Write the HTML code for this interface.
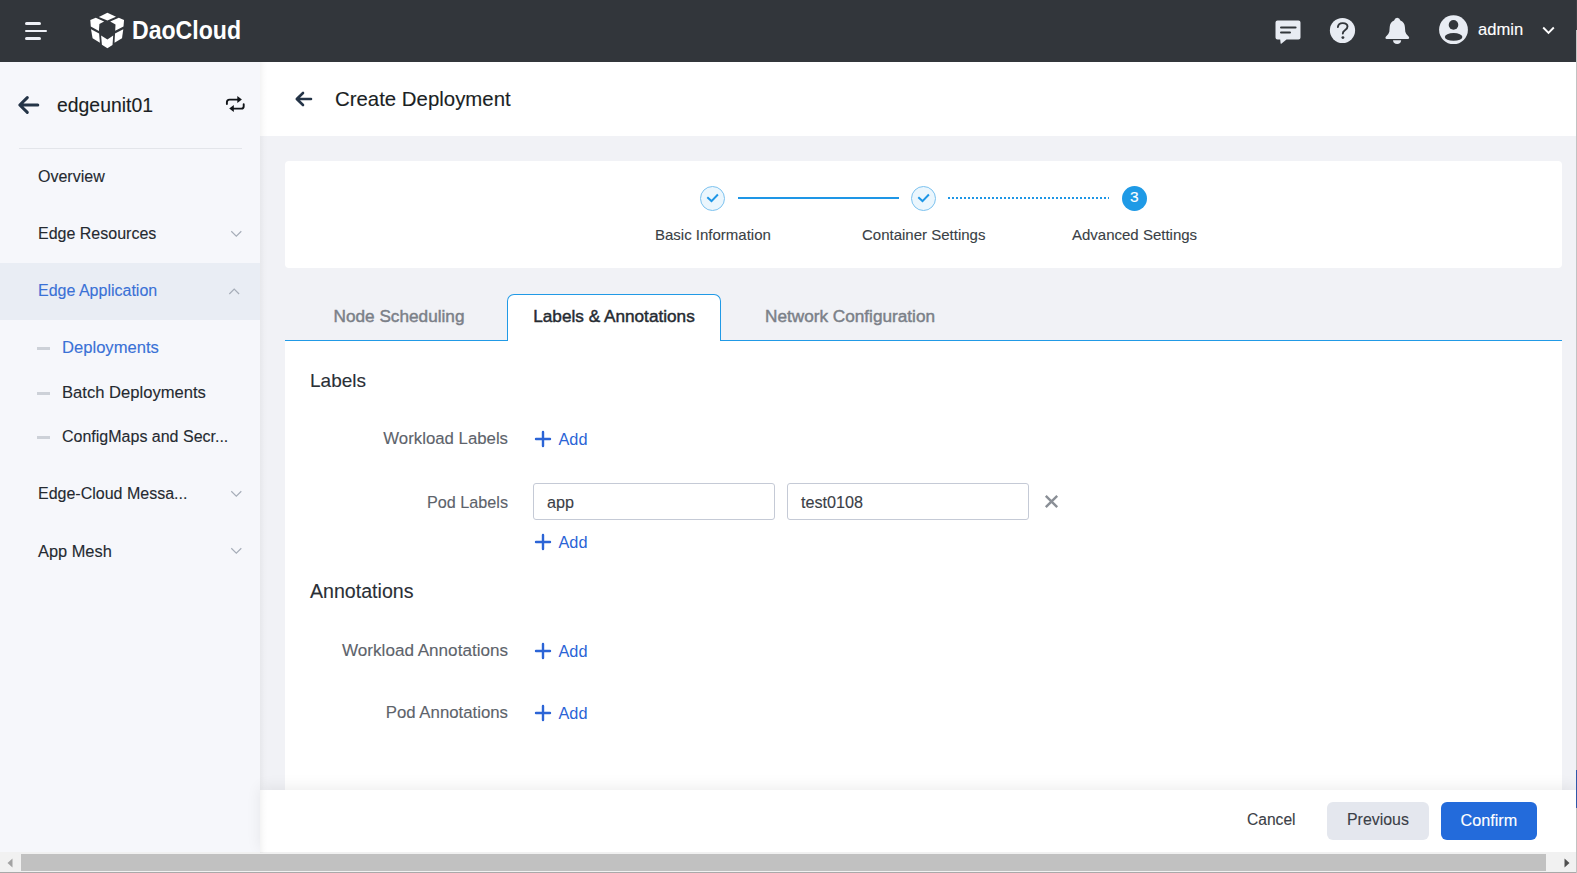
<!DOCTYPE html>
<html><head><meta charset="utf-8">
<style>
*{box-sizing:border-box;margin:0;padding:0}
html,body{width:1577px;height:873px;overflow:hidden;font-family:"Liberation Sans",sans-serif;background:#f1f2f6;color:#252a31}
.abs{position:absolute}
.txt{position:absolute;white-space:nowrap;line-height:1;-webkit-text-stroke:0.12px currentColor}
#hdr{position:absolute;left:0;top:0;width:1577px;height:62px;background:#32363b}
#side{position:absolute;left:0;top:62px;width:260px;height:790px;background:#f6f7fb}
#mainhdr{position:absolute;left:260px;top:62px;width:1317px;height:74px;background:#fff}
#shadow{position:absolute;left:260px;top:62px;width:8px;height:791px;background:linear-gradient(to right,rgba(0,0,0,0.045),rgba(0,0,0,0.01) 50%,rgba(0,0,0,0))}
#stepcard{position:absolute;left:285px;top:161px;width:1277px;height:107px;background:#fff;border-radius:4px}
#content{position:absolute;left:285px;top:341px;width:1277px;height:460px;background:#fff}
#tabline{position:absolute;left:285px;top:340px;width:1277px;height:1px;background:#219ae6}
#footer{position:absolute;left:260px;top:790px;width:1317px;height:62px;background:#fff;box-shadow:0 -3px 14px rgba(0,0,0,0.07)}
#hscroll{position:absolute;left:0;top:852px;width:1577px;height:21px;background:#f1f1f1;border-bottom:1.5px solid #a9a9a9}
.tab{position:absolute;top:294px;height:47px;font-size:17.2px;font-weight:normal;-webkit-text-stroke:0.45px currentColor;color:#7b8088;line-height:45px;text-align:center}
.tab.act{background:#fff;border:1px solid #219ae6;border-bottom:none;border-radius:7px 7px 0 0;color:#262b32;line-height:43.6px}
.lbl{position:absolute;right:1069px;white-space:nowrap;line-height:1;-webkit-text-stroke:0.12px currentColor;font-size:16.8px;color:#5d636b}
.add{position:absolute;left:534px;height:20px;width:60px}
.add .t{position:absolute;left:24.5px;top:1.9px;font-size:16.3px;color:#2b64d6;line-height:1}
.inp{position:absolute;top:483px;height:37px;width:242px;border:1px solid #c5cad6;border-radius:3px;background:#fff}
.inp span{-webkit-text-stroke:0.12px currentColor;position:absolute;left:13px;top:10.3px;font-size:16.2px;color:#3b4047;line-height:1}
.chev{position:absolute;width:14px;height:10px}
</style></head><body>
<div id="hdr">
  <div class="abs" style="left:25px;top:22px;width:16px;height:3px;background:#eef0f6;border-radius:2px"></div>
  <div class="abs" style="left:25px;top:29.9px;width:22px;height:2.2px;background:#eef0f6;border-radius:1px"></div>
  <div class="abs" style="left:25px;top:37px;width:16px;height:3px;background:#eef0f6;border-radius:2px"></div>
  <svg class="abs" style="left:86px;top:8px" width="44" height="44" viewBox="0 0 44 44">
    <g fill="#fff">
      <polygon points="12.85,9.07 21.4,4.8 30,8.8 21.4,12.6"/>
      <polygon points="4.3,12.1 9.8,9.8 18.1,13.4 13.4,15.9 12.9,22.9 4.8,18.6"/>
      <polygon points="38.05,12.1 32.8,9.8 24.2,13.4 29.5,16.6 29.2,22.7 37.5,18.6"/>
      <polygon points="5,21.2 13.1,25.5 13.9,34.8 6.6,30.2"/>
      <polygon points="37.3,21.2 29,25.5 28.5,34.8 36,30.2"/>
      <polygon points="15.1,27.5 21.4,31.5 27.2,27.5 26.5,37 21.4,40.3 15.9,36.8"/>
    </g>
  </svg>
  <div class="txt" style="left:131.8px;top:17px;font-size:26.6px;font-weight:bold;color:#fff;-webkit-text-stroke:0;transform:scaleX(0.868);transform-origin:0 0">DaoCloud</div>
  <!-- chat -->
  <svg class="abs" style="left:1275px;top:20px" width="27" height="25" viewBox="0 0 27 25">
    <path d="M2.5,0.5 H23.5 Q25.5,0.5 25.5,2.5 V17.5 Q25.5,19.5 23.5,19.5 H11.5 L6.6,23.6 Q5.8,24.2 5.6,23.2 L5.2,19.5 H2.5 Q0.5,19.5 0.5,17.5 V2.5 Q0.5,0.5 2.5,0.5 Z" fill="#e8ecf3"/>
    <rect x="5" y="6.4" width="16.6" height="2.2" rx="1.1" fill="#32363b"/>
    <rect x="5" y="11.4" width="11" height="2.2" rx="1.1" fill="#32363b"/>
  </svg>
  <!-- help -->
  <svg class="abs" style="left:1329px;top:17px" width="27" height="27" viewBox="0 0 27 27">
    <circle cx="13.5" cy="13.5" r="12.6" fill="#e8ecf3"/>
    <path d="M8.9,10 Q9.3,6.1 13.7,6.1 Q18.5,6.2 18.5,9.6 Q18.5,11.8 16,13.2 Q13.8,14.5 13.8,16.6" fill="none" stroke="#32363b" stroke-width="1.9" stroke-linecap="round"/>
    <circle cx="13.9" cy="20.6" r="1.45" fill="#32363b"/>
  </svg>
  <!-- bell -->
  <svg class="abs" style="left:1384px;top:17px" width="26" height="28" viewBox="0 0 26 28">
    <path d="M13.2,0.8 Q15.6,0.8 16.4,3.4 Q20.6,5 20.9,10 L21.3,14.8 Q21.8,17.5 25,20 Q25.8,21.7 24.2,22 H2.4 Q0.8,21.7 1.6,20 Q4.8,17.5 5.3,14.8 L5.7,10 Q6,5 10.1,3.4 Q10.9,0.8 13.2,0.8 Z" fill="#e8ecf3"/>
    <path d="M9,23.2 H17.2 Q16.8,27 13.1,27 Q9.4,27 9,23.2 Z" fill="#e8ecf3"/>
  </svg>
  <!-- user -->
  <svg class="abs" style="left:1438px;top:15px" width="31" height="31" viewBox="0 0 31 31">
    <circle cx="15.5" cy="14.7" r="14.4" fill="#e8ecf3"/>
    <circle cx="15.5" cy="9.9" r="4.8" fill="#32363b"/>
    <ellipse cx="15.6" cy="21.9" rx="8.8" ry="3.9" fill="#32363b"/>
  </svg>
  <div class="txt" style="left:1478px;top:21.5px;font-size:16.6px;color:#fff">admin</div>
  <svg class="abs" style="left:1542px;top:26px" width="13" height="9" viewBox="0 0 13 9"><path d="M1.2,1.5 L6.5,6.8 L11.8,1.5" fill="none" stroke="#fff" stroke-width="1.9"/></svg>
</div>

<div id="side">
  <svg class="abs" style="left:17px;top:33px" width="23" height="20" viewBox="0 0 23 20">
    <path d="M20.8,10 H3.5 M10.3,2.6 L2.8,10 L10.3,17.4" fill="none" stroke="#243447" stroke-width="3" stroke-linecap="round" stroke-linejoin="round"/>
  </svg>
  <div class="txt" style="left:57px;top:33.8px;font-size:19.4px;color:#1b1f24">edgeunit01</div>
  <svg class="abs" style="left:225px;top:33px" width="21" height="20" viewBox="0 0 21 20">
    <path d="M1.9,9.1 V7.2 Q1.9,4.6 4.6,4.6 H13" fill="none" stroke="#111418" stroke-width="1.9" stroke-linecap="round"/>
    <polygon points="12.3,1.1 16.9,4.6 12.3,7.9" fill="#111418"/>
    <path d="M18.7,9.3 V11.2 Q18.7,13.6 16.4,13.6 H8.3" fill="none" stroke="#111418" stroke-width="1.9" stroke-linecap="round"/>
    <polygon points="8.8,10.1 4.2,13.6 8.8,17.1" fill="#111418"/>
  </svg>
  <div class="abs" style="left:19px;top:86px;width:223px;height:1px;background:#e3e5ea"></div>
  <div class="txt" style="left:38px;top:107px;font-size:16px;color:#252a31">Overview</div>
  <div class="txt" style="left:38px;top:164px;font-size:16px;color:#252a31">Edge Resources</div>
  <svg class="chev" style="left:229px;top:167px" viewBox="0 0 14 10"><path d="M2.3,2.2 L7.3,7.1 L12.3,2.2" fill="none" stroke="#a6adb8" stroke-width="1.2"/></svg>
  <div class="abs" style="left:0;top:201px;width:260px;height:57px;background:#e9edf4"></div>
  <div class="txt" style="left:38px;top:221px;font-size:16px;color:#3a71d6">Edge Application</div>
  <svg class="chev" style="left:227px;top:224px" viewBox="0 0 14 10"><path d="M2.3,8 L7.2,3.1 L12.1,8" fill="none" stroke="#a6adb8" stroke-width="1.2"/></svg>
  <div class="abs" style="left:37px;top:284.5px;width:13px;height:3px;background:#cdd1d8"></div>
  <div class="txt" style="left:62px;top:277.6px;font-size:16.6px;color:#3a71d6">Deployments</div>
  <div class="abs" style="left:37px;top:329.5px;width:13px;height:3px;background:#cdd1d8"></div>
  <div class="txt" style="left:62px;top:322.6px;font-size:16.6px;color:#252a31">Batch Deployments</div>
  <div class="abs" style="left:37px;top:373.5px;width:13px;height:3px;background:#cdd1d8"></div>
  <div class="txt" style="left:62px;top:367px;font-size:16px;color:#252a31">ConfigMaps and Secr...</div>
  <div class="txt" style="left:38px;top:424px;font-size:16px;color:#252a31">Edge-Cloud Messa...</div>
  <svg class="chev" style="left:229px;top:427px" viewBox="0 0 14 10"><path d="M2.3,2.2 L7.3,7.1 L12.3,2.2" fill="none" stroke="#a6adb8" stroke-width="1.2"/></svg>
  <div class="txt" style="left:38px;top:481px;font-size:16.4px;color:#252a31">App Mesh</div>
  <svg class="chev" style="left:229px;top:484px" viewBox="0 0 14 10"><path d="M2.3,2.2 L7.3,7.1 L12.3,2.2" fill="none" stroke="#a6adb8" stroke-width="1.2"/></svg>
</div>

<div id="mainhdr">
  <svg class="abs" style="left:34px;top:29px" width="20" height="17" viewBox="0 0 20 17">
    <path d="M17,8 H3.5 M9,2 L2.8,8 L9,14" fill="none" stroke="#243447" stroke-width="2.6" stroke-linecap="round" stroke-linejoin="round"/>
  </svg>
  <div class="txt" style="left:75px;top:27.3px;font-size:20.4px;color:#1b1f24">Create Deployment</div>
</div>

<div id="stepcard">
  <svg class="abs" style="left:0;top:0" width="1277" height="107">
    <circle cx="427.5" cy="37.5" r="12" fill="#ebf6fd" stroke="#7cc2ef" stroke-width="1"/>
    <path d="M422.3,36.3 L426.5,40.1 L432.9,33.5" fill="none" stroke="#1e96e6" stroke-width="2"/>
    <rect x="453" y="36" width="161" height="2" fill="#1e96e6"/>
    <circle cx="638.5" cy="37.5" r="12" fill="#ebf6fd" stroke="#7cc2ef" stroke-width="1"/>
    <path d="M633.3,36.3 L637.5,40.1 L643.9,33.5" fill="none" stroke="#1e96e6" stroke-width="2"/>
    <line x1="663" y1="37" x2="824" y2="37" stroke="#1e96e6" stroke-width="2" stroke-dasharray="2 2"/>
    <circle cx="849.5" cy="37.5" r="12.5" fill="#1f9ae6"/>
  </svg>
  <div class="txt" style="left:845px;top:28.2px;font-size:15.5px;color:#fff">3</div>
  <div class="txt" style="left:370px;top:66.3px;font-size:15px;color:#3a3f46">Basic Information</div>
  <div class="txt" style="left:577px;top:66.3px;font-size:15px;color:#3a3f46">Container Settings</div>
  <div class="txt" style="left:787px;top:66.3px;font-size:15px;color:#3a3f46">Advanced Settings</div>
</div>

<div id="content"></div>
<div id="tabline"></div>
<div class="tab" style="left:310px;width:178px">Node Scheduling</div>
<div class="tab act" style="left:507px;width:214px">Labels &amp; Annotations</div>
<div class="tab" style="left:740px;width:220px">Network Configuration</div>

<div class="txt" style="left:310px;top:371.2px;font-size:19px;color:#2a2f36">Labels</div>
<div class="lbl" style="top:431.3px">Workload Labels</div>
<div class="add" style="top:429px">
  <svg class="abs" style="left:0;top:1px" width="18" height="18" viewBox="0 0 18 18"><path d="M9,2 V16 M2,9 H16" stroke="#2b64d6" stroke-width="2.4" stroke-linecap="round"/></svg>
  <span class="t">Add</span>
</div>
<div class="lbl" style="top:493.6px;font-size:16.2px">Pod Labels</div>
<div class="inp" style="left:533px"><span>app</span></div>
<div class="inp" style="left:787px"><span>test0108</span></div>
<svg class="abs" style="left:1044px;top:494px" width="15" height="15" viewBox="0 0 15 15"><path d="M1.8,1.8 L13.2,13.2 M13.2,1.8 L1.8,13.2" stroke="#8a8f96" stroke-width="2.4"/></svg>
<div class="add" style="top:532px">
  <svg class="abs" style="left:0;top:1px" width="18" height="18" viewBox="0 0 18 18"><path d="M9,2 V16 M2,9 H16" stroke="#2b64d6" stroke-width="2.4" stroke-linecap="round"/></svg>
  <span class="t">Add</span>
</div>

<div class="txt" style="left:310px;top:581.8px;font-size:19.6px;color:#2a2f36">Annotations</div>
<div class="lbl" style="top:642.3px;font-size:17.1px">Workload Annotations</div>
<div class="add" style="top:641px">
  <svg class="abs" style="left:0;top:1px" width="18" height="18" viewBox="0 0 18 18"><path d="M9,2 V16 M2,9 H16" stroke="#2b64d6" stroke-width="2.4" stroke-linecap="round"/></svg>
  <span class="t">Add</span>
</div>
<div class="lbl" style="top:705.2px">Pod Annotations</div>
<div class="add" style="top:703px">
  <svg class="abs" style="left:0;top:1px" width="18" height="18" viewBox="0 0 18 18"><path d="M9,2 V16 M2,9 H16" stroke="#2b64d6" stroke-width="2.4" stroke-linecap="round"/></svg>
  <span class="t">Add</span>
</div>

<div id="footer">
  <div class="txt" style="left:987px;top:22.3px;font-size:15.6px;color:#3b4047">Cancel</div>
  <div class="abs" style="left:1067px;top:12px;width:102px;height:38px;background:#e4e7ee;border-radius:6px"></div>
  <div class="txt" style="left:1087px;top:22.4px;font-size:15.9px;color:#3b4047">Previous</div>
  <div class="abs" style="left:1181px;top:12px;width:96px;height:38px;background:#236bdb;border-radius:6px"></div>
  <div class="txt" style="left:1200.5px;top:21.9px;font-size:16.2px;color:#fff">Confirm</div>
</div>

<div id="hscroll">
  <div class="abs" style="left:21px;top:2px;width:1525px;height:17px;background:#c1c1c1"></div>
  <svg class="abs" style="left:6px;top:5.5px" width="8" height="10" viewBox="0 0 8 10"><path d="M6.5,0.5 V9.5 L1.5,5 Z" fill="#a3a3a3"/></svg>
  <svg class="abs" style="left:1563px;top:5.5px" width="8" height="10" viewBox="0 0 8 10"><path d="M1.5,0.5 V9.5 L6.5,5 Z" fill="#505050"/></svg>
</div>
<div class="abs" style="left:1576px;top:0;width:1px;height:30px;background:#3d4045"></div><div class="abs" style="left:1576px;top:30px;width:1px;height:843px;background:#c2c2c2"></div><div class="abs" style="left:1576px;top:770px;width:1px;height:38px;background:#3059a8"></div>
<div id="shadow"></div>
</body></html>
